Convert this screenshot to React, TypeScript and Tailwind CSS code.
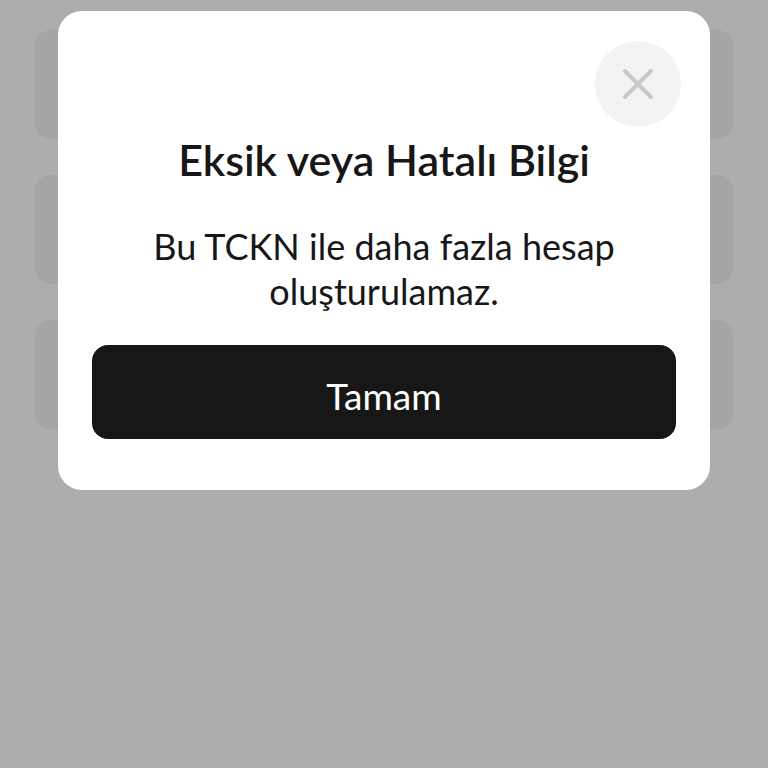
import { useState } from 'react'

const fields = ['first', 'second', 'third']

function CloseIcon() {
  return (
    <svg viewBox="0 0 32 32" className="h-8 w-8" fill="none" aria-hidden="true">
      <path d="M3 3 29 29M29 3 3 29" stroke="#c8c8c8" strokeWidth="4" strokeLinecap="round" />
    </svg>
  )
}

interface AlertDialogProps {
  title: string
  message: string
  confirmLabel: string
  onClose: () => void
}

function AlertDialog({ title, message, confirmLabel, onClose }: AlertDialogProps) {
  return (
    <div className="absolute inset-x-0 top-0 px-[58px] pt-[11px]">
      <div
        role="dialog"
        aria-modal="true"
        aria-labelledby="alert-title"
        aria-describedby="alert-message"
        className="flex flex-col rounded-3xl bg-white px-[34px] pt-[30px] pb-[51px] text-center text-[#171717]"
      >
        <button
          type="button"
          aria-label="Kapat"
          onClick={onClose}
          className="-mr-[5px] flex h-[86px] w-[86px] items-center justify-center self-end rounded-full bg-[#f3f3f3]"
        >
          <CloseIcon />
        </button>
        <h1 id="alert-title" className="mt-[7px] text-[43px] leading-[52px] font-semibold">
          {title}
        </h1>
        <p id="alert-message" className="mx-auto mt-[38px] max-w-[500px] text-[36px] leading-[45px]">
          {message}
        </p>
        <button
          type="button"
          onClick={onClose}
          className="mt-[31px] h-[94px] rounded-2xl bg-[#171717] pt-1.5 text-[37px] leading-[45px] text-white"
        >
          {confirmLabel}
        </button>
      </div>
    </div>
  )
}

export default function App() {
  const [open, setOpen] = useState(true)

  return (
    <main className="relative min-h-screen bg-[#adadad] px-[35px] pt-[30px] font-['Lato',sans-serif]">
      <div className="flex flex-col gap-9">
        {fields.map((field) => (
          <div key={field} className="h-[109px] rounded-2xl bg-[#a5a5a5]" />
        ))}
      </div>
      {open && (
        <AlertDialog
          title="Eksik veya Hatalı Bilgi"
          message="Bu TCKN ile daha fazla hesap oluşturulamaz."
          confirmLabel="Tamam"
          onClose={() => setOpen(false)}
        />
      )}
    </main>
  )
}
